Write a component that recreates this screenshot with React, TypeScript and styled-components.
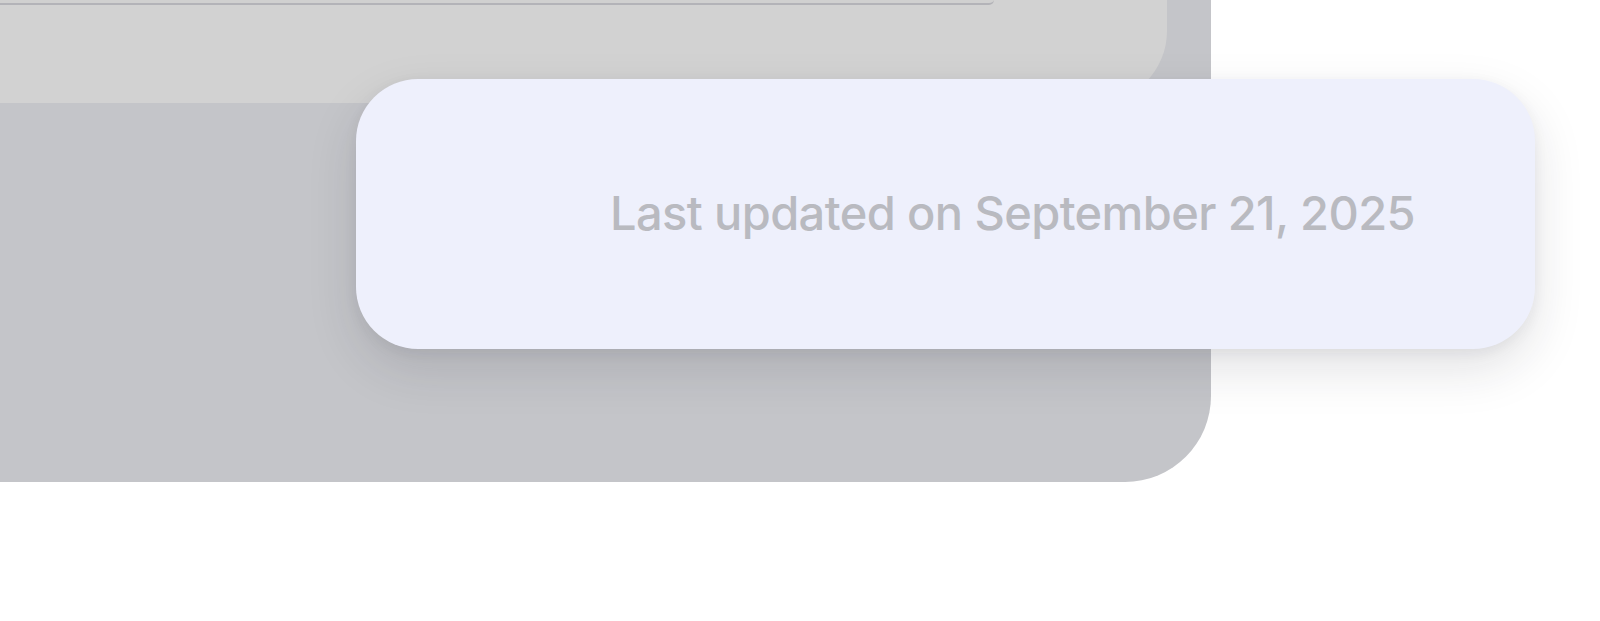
import React from "react";
import styled, { createGlobalStyle } from "styled-components";

const Global = createGlobalStyle`
  html, body {
    margin: 0;
    padding: 0;
    background: #ffffff;
    font-family: Inter, "Noto Sans", sans-serif;
  }
  #root {
    width: 1600px;
    height: 621px;
    overflow: hidden;
  }
`;

const Stage = styled.div`
  position: relative;
  width: 1600px;
  height: 621px;
  background: #ffffff;
`;

const Panel = styled.div`
  width: 1211px;
  height: 482px;
  background: #c4c5c9;
  border-bottom-right-radius: 86px;
  display: flex;
  flex-direction: column;
`;

const Header = styled.div`
  width: 1167px;
  height: 103px;
  background: #d2d2d2;
  border-bottom-right-radius: 72px;
  display: flex;
  flex-direction: column;
`;

const TopBar = styled.div`
  width: 994px;
  height: 3px;
  border-bottom: 2px solid #b3b3b8;
  border-bottom-right-radius: 26px;
  background: #d0d0d0;
`;

const Toast = styled.div`
  position: absolute;
  left: 356px;
  top: 79px;
  width: 1179px;
  height: 270px;
  box-sizing: border-box;
  background: #eef0fc;
  border-radius: 62px;
  box-shadow: 0 20px 50px rgba(30, 30, 50, 0.13), 0 4px 14px rgba(30, 30, 50, 0.06);
  display: flex;
  align-items: center;
  justify-content: flex-end;
  padding: 0 120px 4px 0;
`;

const Stamp = styled.span`
  font-family: Inter, "Noto Sans", sans-serif;
  font-size: 47px;
  font-weight: 500;
  letter-spacing: -0.6px;
  color: #b9bac0;
  white-space: nowrap;
`;

export default function App() {
  return (
    <>
      <Global />
      <Stage>
        <Panel>
          <Header>
            <TopBar />
          </Header>
        </Panel>
        <Toast>
          <Stamp>Last updated on September 21, 2025</Stamp>
        </Toast>
      </Stage>
    </>
  );
}
